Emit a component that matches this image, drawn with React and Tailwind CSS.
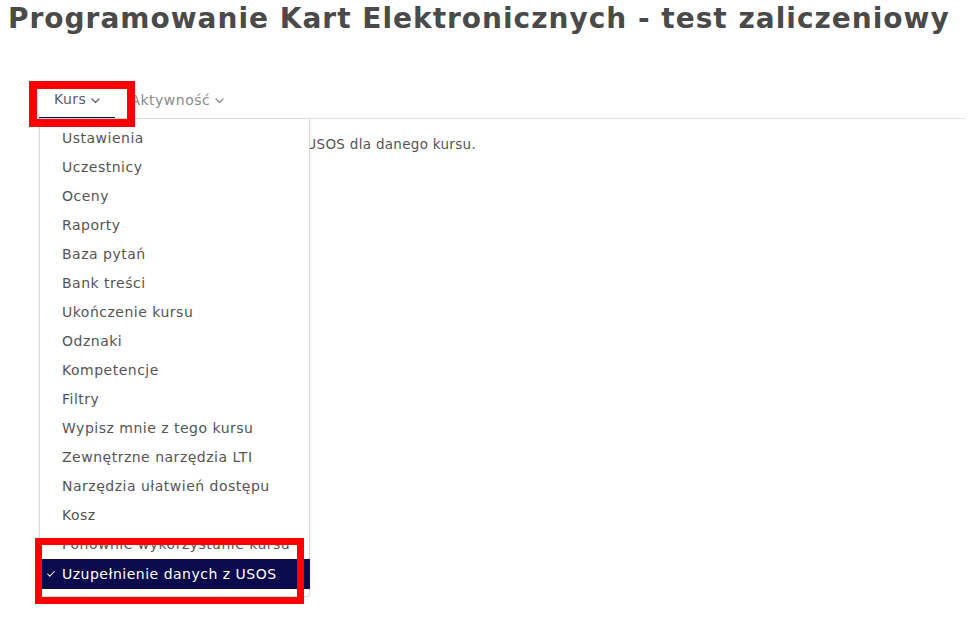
import { Check } from 'lucide-react';

const items = [
  'Ustawienia',
  'Uczestnicy',
  'Oceny',
  'Raporty',
  'Baza pytań',
  'Bank treści',
  'Ukończenie kursu',
  'Odznaki',
  'Kompetencje',
  'Filtry',
  'Wypisz mnie z tego kursu',
  'Zewnętrzne narzędzia LTI',
  'Narzędzia ułatwień dostępu',
  'Kosz',
  'Ponownie wykorzystanie kursu',
];

function Chevron() {
  return (
    <svg width="9" height="6" viewBox="0 0 9 6" className="ml-[5px] mt-[2px]" fill="none">
      <path d="M1 1l3.5 3.5L8 1" stroke="currentColor" strokeWidth="1.2" strokeLinecap="round" strokeLinejoin="round" />
    </svg>
  );
}

export default function App() {
  return (
    <div className="relative w-[972px] h-[626px] bg-white overflow-hidden font-['DejaVu_Sans',sans-serif]">
      {/* Tytuł kursu */}
      <h1 className="pl-[8px] pt-[3px] text-[28px] leading-[32px] tracking-[1px] font-bold text-[#4a4a4a] whitespace-nowrap">
        Programowanie Kart Elektronicznych - test zaliczeniowy
      </h1>

      {/* Nawigacja */}
      <nav className="mt-[47px] ml-[39px] mr-[7px] flex border-b border-[#dee2e6] h-[37px] tracking-[0.5px]">
        <div className="flex items-center px-[15px] text-[14px] text-[#5c5c6e] border-b-2 border-[#0a0a4d] -mb-px">
          Kurs
          <Chevron />
        </div>
        <div className="flex items-center px-[15px] text-[14px] text-[#8a8a8a]">
          Aktywność
          <Chevron />
        </div>
      </nav>

      {/* Treść strony */}
      <p className="mt-[15px] w-[476px] text-right text-[13.5px] tracking-[0.3px] text-[#555] whitespace-nowrap">
        Uzupełnienie danych z USOS dla danego kursu.
      </p>

      {/* Menu rozwijane */}
      <div className="absolute left-[39px] top-[118px] w-[271px] bg-white border border-[#d9d9d9] rounded-b-[4px] shadow-[0_2px_4px_rgba(0,0,0,0.08)] pt-[5px] pb-[7px] tracking-[0.5px]">
        {items.map((item) => (
          <div key={item} className="h-[29px] flex items-center pl-[22px] text-[14px] text-[#555] whitespace-nowrap">
            {item}
          </div>
        ))}
        <div className="h-[30px] flex items-center bg-[#0a0a4d] text-white text-[14px] -mr-px whitespace-nowrap">
          <Check className="w-[10px] h-[10px] ml-[6px] mr-[6px]" strokeWidth={2.5} />
          Uzupełnienie danych z USOS
        </div>
      </div>

      {/* Czerwone ramki */}
      <div className="absolute left-[29px] top-[81px] w-[106px] h-[46px] border-[8px] border-[#ff0000]" />
      <div className="absolute left-[35px] top-[538px] w-[269px] h-[66px] border-[7px] border-[#ff0000]" />
    </div>
  );
}
